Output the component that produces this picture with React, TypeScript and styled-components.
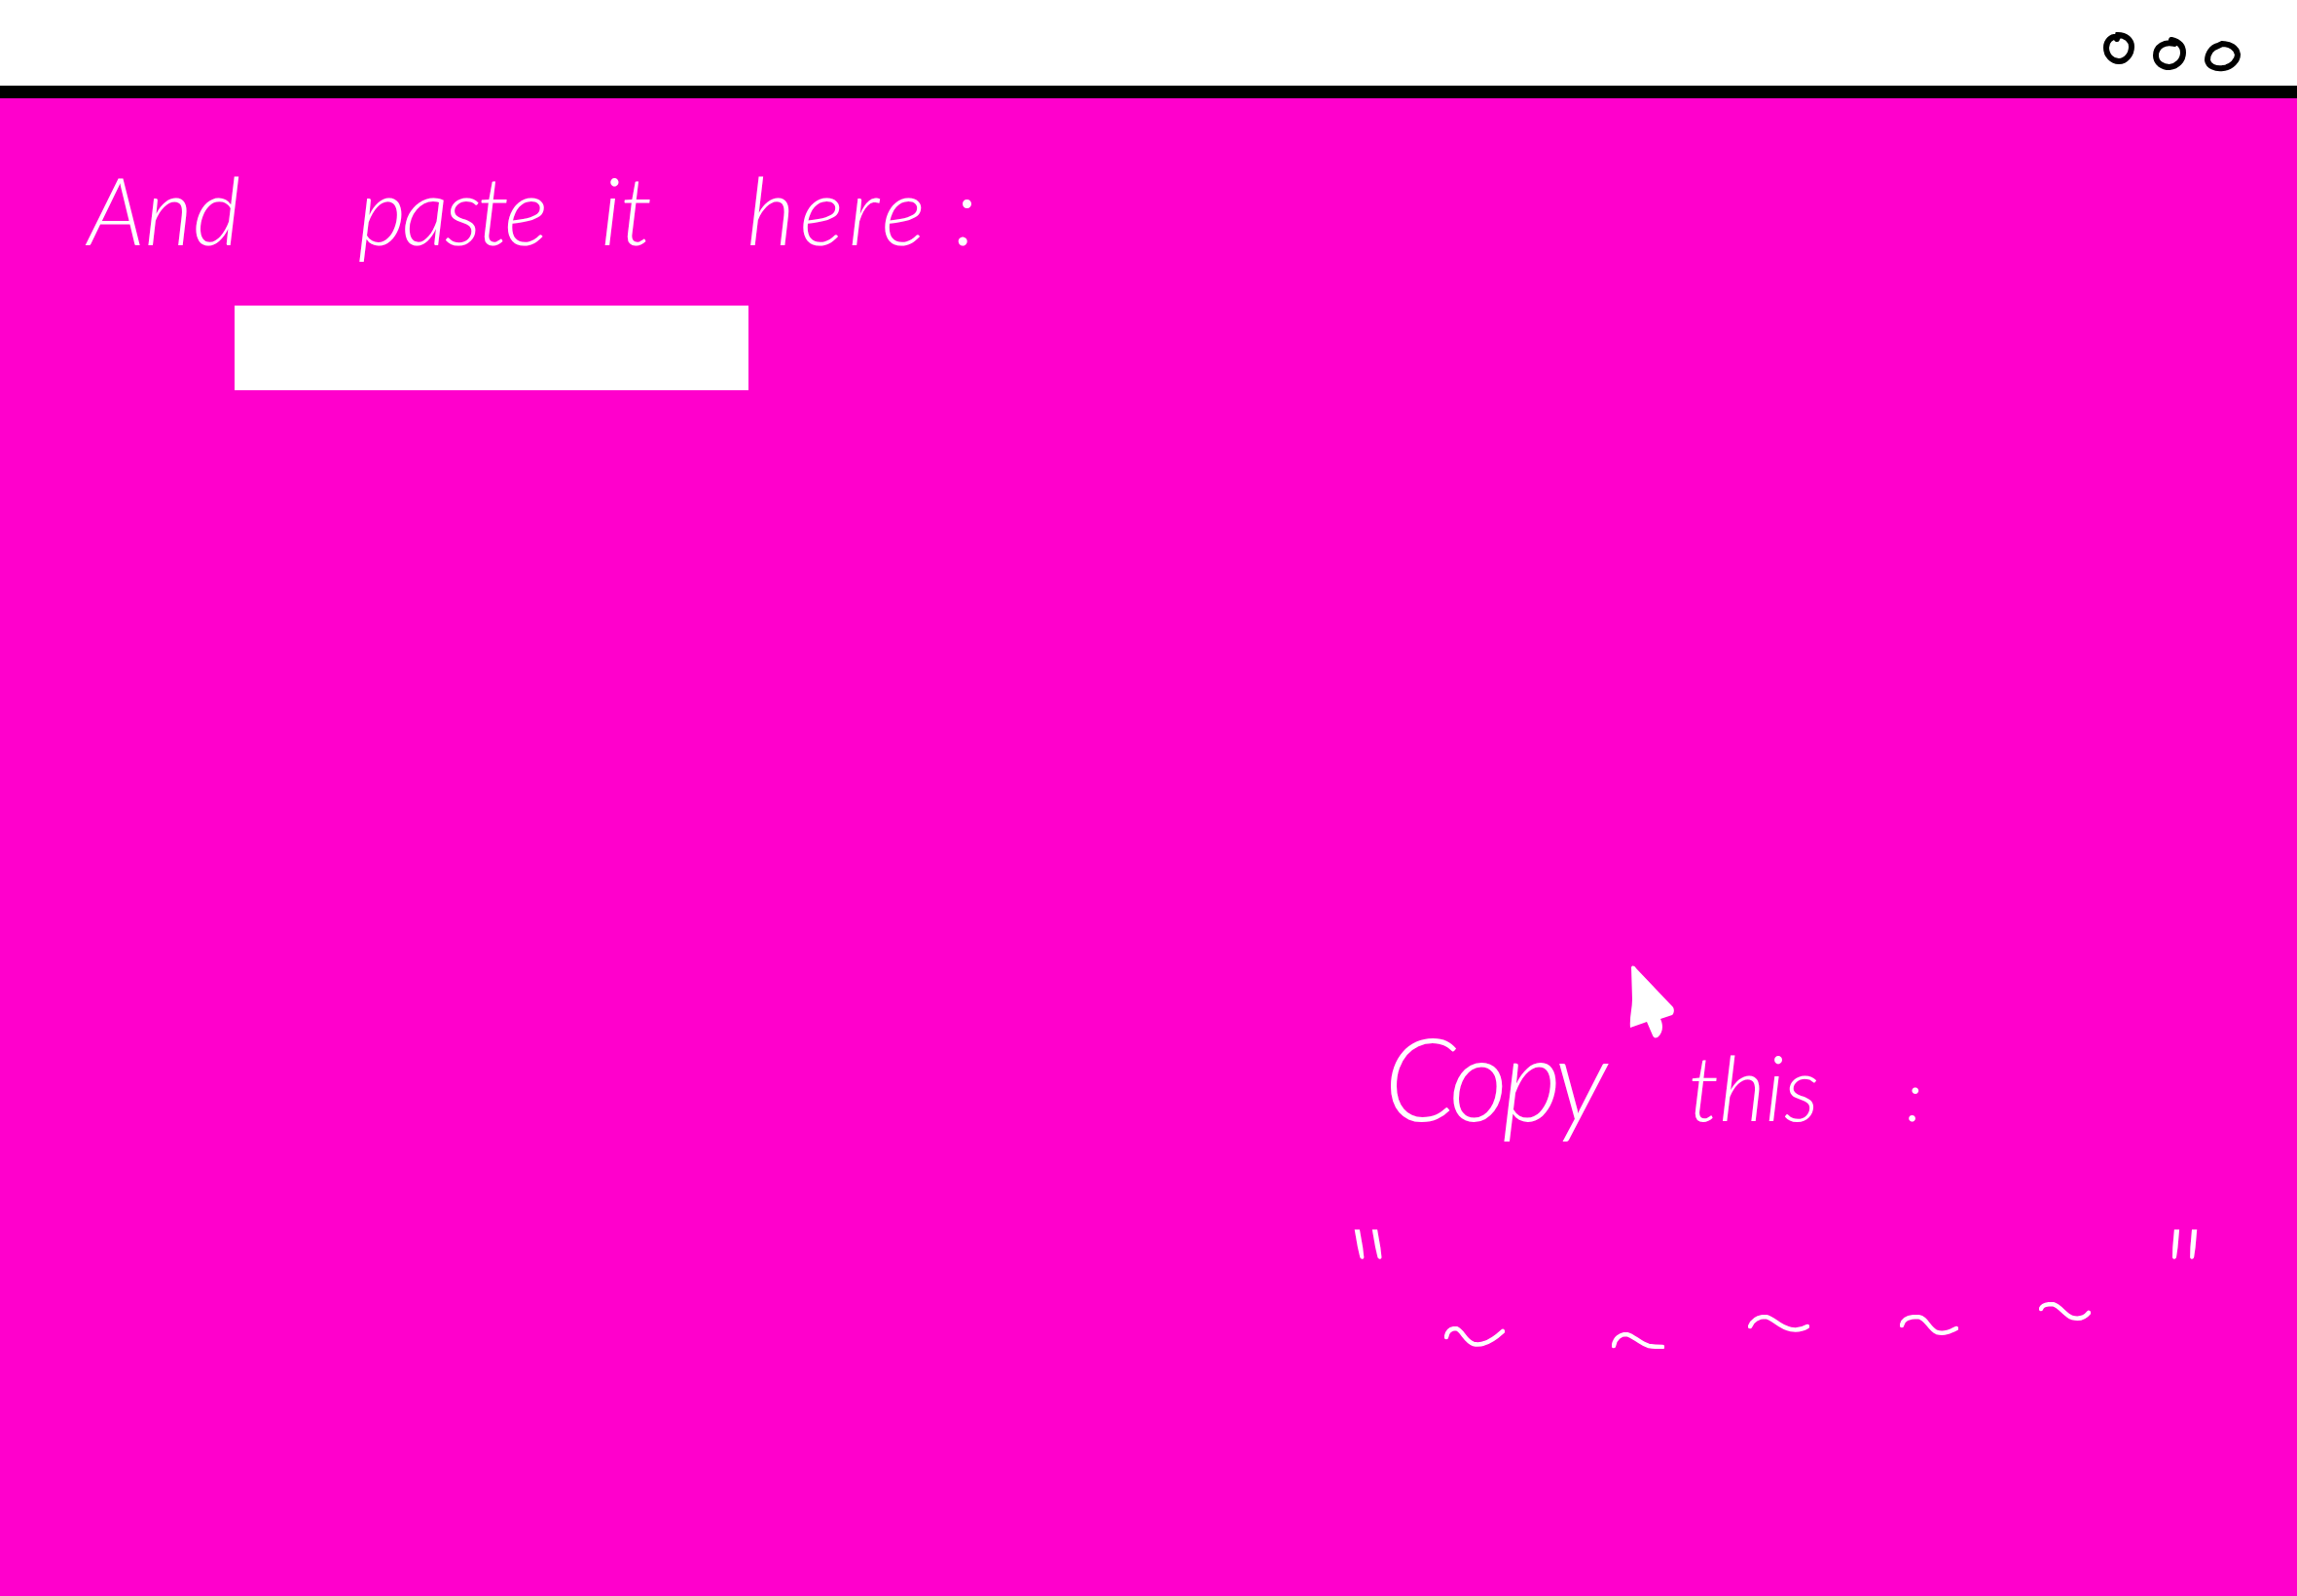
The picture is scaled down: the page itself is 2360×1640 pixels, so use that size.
import styled, { createGlobalStyle } from 'styled-components';

const GlobalStyle = createGlobalStyle`
    html, body {
        margin: 0;
        padding: 0;
        background: #ff00cc;
    }
`

const headingWords = [
    { text: 'And', gap: 120, spacing: 0 },
    { text: 'paste', gap: 58, spacing: -4 },
    { text: 'it', gap: 97, spacing: 0 },
    { text: 'here', gap: 25, spacing: 5 },
    { text: ':', gap: 0, spacing: 0 },
]

const squiggles = [
    { w: 62, h: 21, left: 99, top: 25, d: 'M2 11 C3 4 7 2 12 2 C18 3 21 15 30 18 C38 20 47 17 60 5' },
    { w: 54, h: 17, left: 110, top: 31, d: 'M2 14 C3 6 9 2 15 2 C22 3 28 11 38 14 C44 15 48 15 52 15' },
    { w: 63, h: 18, left: 86, top: 13, d: 'M2 12 C5 5 11 2 18 2 C26 3 32 13 44 15 C50 16 56 15 61 12' },
    { w: 60, h: 22, left: 93, top: 13, d: 'M2 11 C3 4 10 2 18 2 C28 3 29 14 38 18 C46 20 52 17 58 14' },
    { w: 53, h: 20, left: 83, top: 0, d: 'M2 7 C3 3 8 2 14 2 C22 4 26 13 34 16 C42 18 47 16 51 11' },
]

const App = () => {
    return (
        <Page>
            <GlobalStyle />
            <TopBar>
                <Dot $top={0} width={32} height={33} viewBox="0 0 32 33">
                    <path d="M15 5 C8 4 3 9 3 16 C3 24 9 30 16 30 C23 30 29 23 29 15 C29 8 23 3 15 3 L14 7" />
                </Dot>
                <Dot $top={5} width={34} height={34} viewBox="0 0 34 34">
                    <path d="M22 7 C12 4 3 10 3 19 C3 27 10 31 17 31 C25 30 31 24 31 16 C31 10 27 5 19 3" />
                </Dot>
                <Dot $top={8} width={37} height={33} viewBox="0 0 37 33">
                    <path d="M14 6 C7 8 3 14 3 21 C4 27 11 30 19 29 C28 28 34 21 34 15 C33 8 26 4 18 4 L14 6" />
                </Dot>
            </TopBar>
            <Main>
                <Heading>
                    {headingWords.map((word, index) =>
                        <Word key={index} $gap={word.gap} $spacing={word.spacing}>{word.text}</Word>
                    )}
                </Heading>
                <PasteInput aria-label="Paste" />

                <CopySection>
                    <Cursor width={46} height={76} viewBox="0 0 46 76">
                        <path d="M2 3 C3 1 5 1 7 4 L45 44 C47 48 45 51 44 52 L32 56 C35 62 35 70 29 75 C26 76 25 75 24 73 L18 59 L1 65 C0 55 3 45 3 36 Z" />
                    </Cursor>
                    <CopyHeading>
                        <CopyWord $size={118} $gap={89} $spacing={-6}>Copy</CopyWord>
                        <CopyWord $size={92} $gap={89} $spacing={0}>this</CopyWord>
                        <CopyWord $size={72} $gap={0} $spacing={0}>:</CopyWord>
                    </CopyHeading>
                    <QuoteRow>
                        <Quote $skew={10}>"</Quote>
                        <Quote $skew={-5}>"</Quote>
                    </QuoteRow>
                    <SquiggleRow>
                        {squiggles.map((squiggle, index) =>
                            <Squiggle
                                key={index}
                                $left={squiggle.left}
                                $top={squiggle.top}
                                width={squiggle.w}
                                height={squiggle.h}
                                viewBox={`0 0 ${squiggle.w} ${squiggle.h}`}
                            >
                                <path d={squiggle.d} />
                            </Squiggle>
                        )}
                    </SquiggleRow>
                </CopySection>
            </Main>
        </Page>
    )
}

const Page = styled.div`
    width: 2360px;
    height: 1640px;
    display: flex;
    flex-direction: column;
    overflow: hidden;
    background: #ff00cc;
    font-family: "Lato", "Liberation Sans", sans-serif;
    color: white;
`

const TopBar = styled.header`
    height: 88px;
    box-sizing: content-box;
    flex: none;
    display: flex;
    justify-content: flex-end;
    align-items: flex-start;
    gap: 19px;
    padding-right: 58px;
    background: white;
    border-bottom: 13px solid black;
`

const Dot = styled.svg<{ $top: number }>`
    margin-top: ${({ $top }) => 33 + $top}px;
    fill: none;
    stroke: black;
    stroke-width: 6;
    stroke-linecap: round;
`

const Main = styled.main`
    flex: 1;
    display: flex;
    flex-direction: column;
    padding: 54px 0 0 90px;
`

const Heading = styled.h1`
    margin: 0;
    display: flex;
    align-items: baseline;
    font-size: 96px;
    font-weight: 300;
    font-style: italic;
    line-height: 120px;
`

const Word = styled.span<{ $gap: number, $spacing: number }>`
    margin-right: ${({ $gap }) => $gap}px;
    letter-spacing: ${({ $spacing }) => $spacing}px;
`

const PasteInput = styled.input`
    display: block;
    box-sizing: border-box;
    width: 528px;
    height: 87px;
    margin: 39px 0 0 151px;
    padding: 0 16px;
    border: none;
    border-radius: 0;
    background: white;
    outline: none;
`

const CopySection = styled.section`
    width: 881px;
    margin: 590px 0 0 1295px;
    display: flex;
    flex-direction: column;
`

const Cursor = styled.svg`
    flex: none;
    margin-left: 289px;
    fill: white;
`

const CopyHeading = styled.h2`
    margin: 0 0 0 37px;
    display: flex;
    align-items: baseline;
    font-weight: 300;
    font-style: italic;
    line-height: 80px;
`

const CopyWord = styled.span<{ $size: number, $gap: number, $spacing: number }>`
    font-size: ${({ $size }) => $size}px;
    margin-right: ${({ $gap }) => $gap}px;
    letter-spacing: ${({ $spacing }) => $spacing}px;
`

const QuoteRow = styled.div`
    height: 50px;
    margin-top: 90px;
    display: flex;
    justify-content: space-between;
`

const Quote = styled.span<{ $skew: number }>`
    display: block;
    font-size: 125px;
    font-weight: 300;
    line-height: 100px;
    transform: skewX(${({ $skew }) => $skew}deg);
`

const SquiggleRow = styled.div`
    display: flex;
    align-items: flex-start;
    margin-top: 34px;
`

const Squiggle = styled.svg<{ $left: number, $top: number }>`
    flex: none;
    margin-left: ${({ $left }) => $left}px;
    margin-top: ${({ $top }) => $top}px;
    fill: none;
    stroke: white;
    stroke-width: 4.5;
    stroke-linecap: round;
`

export default App
